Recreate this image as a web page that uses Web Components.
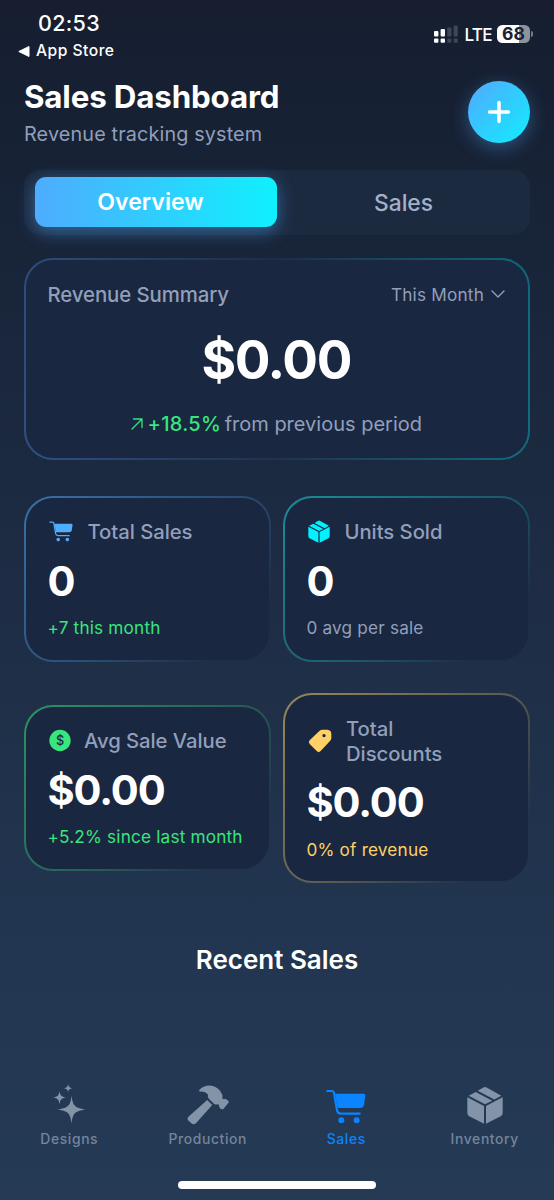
<!DOCTYPE html>
<html lang="en">
<head>
<meta charset="utf-8">
<meta name="viewport" content="width=device-width, initial-scale=1">
<title>Sales Dashboard</title>
<style>
    html, body {
        margin: 0;
        height: 100%;
    }
    body {
        font-family: Inter, "Liberation Sans", sans-serif;
        color: #fff;
        --muted: #929fbb;
        --blue: #4facfe;
        --cyan: #00f2fe;
        --green: #39e57d;
        --yellow: #ffd166;
        --card: #192740;
    }
</style>
</head>
<body>
<sales-app>
    <status-bar slot="status" time="02:53" back="App Store" network="LTE" battery="68"></status-bar>
    <page-header heading="Sales Dashboard" sub="Revenue tracking system"></page-header>
    <segment-control>
        <segment-item active>Overview</segment-item>
        <segment-item>Sales</segment-item>
    </segment-control>
    <revenue-card label="Revenue Summary" period="This Month" change="+18.5%" note="from previous period">$0.00</revenue-card>
    <stat-grid>
        <stat-card icon="cart" label="Total Sales" note="+7 this month" style="--edge: 79,172,254; --accent: var(--blue); --note: var(--green); --gap: 14.5px">0</stat-card>
        <stat-card icon="box" label="Units Sold" note="0 avg per sale" style="--edge: 30,222,226; --accent: var(--cyan); --note: var(--muted); --gap: 14.5px">0</stat-card>
        <stat-card icon="dollar" label="Avg Sale Value" note="+5.2% since last month" style="--edge: 57,229,125; --accent: var(--green); --note: var(--green); --gap: 13px">$0.00</stat-card>
        <stat-card icon="tag" label="Total Discounts" note="0% of revenue" style="--edge: 255,209,102; --accent: var(--yellow); --note: var(--yellow); --label-width: 120px">$0.00</stat-card>
    </stat-grid>
    <section-title>Recent Sales</section-title>
    <tab-bar slot="tabs">
        <tab-item icon="sparkles">Designs</tab-item>
        <tab-item icon="hammer">Production</tab-item>
        <tab-item icon="cart" active>Sales</tab-item>
        <tab-item icon="box">Inventory</tab-item>
    </tab-bar>
</sales-app>

<script>
const ICONS = {
    cart: {box: "0 0 120 106", body: `
        <path d="M4 6H17Q23 6 24 12L33 64Q35 74 44 74H101" fill="none" stroke="currentColor" stroke-width="6.5" stroke-linecap="round"/>
        <path d="M27 14H112Q119 14 118 21L114 48Q112 57 103 57H35Z"/>
        <circle cx="46" cy="94" r="9"/><circle cx="92" cy="94" r="9"/>`},
    box: {box: "0 0 108 114", body: `
        <path d="M1 34L51 60V113L7 91Q1 88 1 81Z"/>
        <path d="M107 34L57 60V113L101 91Q107 88 107 81Z"/>
        <path d="M5 29L26 18L76 44L54 55Z"/>
        <path d="M32 14.5L48 5Q54 1 60 5L103 29L82 40.5Z"/>`},
    dollar: {box: "0 0 64 64", body: `
        <circle cx="32" cy="32" r="31"/>
        <text x="32" y="45" text-anchor="middle" font-size="37" font-weight="500" fill="#1a2740">$</text>`},
    tag: {box: "0 0 72 72", body: `
        <path fill-rule="evenodd" d="M5 34L34 6Q38 2 44 2H58Q70 3 70 15V27Q70 32 66 36L37 67Q32 72 27 67L5 45Q0 39 5 34ZM48 15a5 5 0 1 0 .1 0Z"/>`},
    sparkles: {box: "0 0 96 116", body: `
        <path d="M54 34C58 64 63 69 95 74C63 79 58 84 54 115C50 84 45 79 13 74C45 69 50 64 54 34Z"/>
        <path d="M19 20C21 33 24 37 38 39C24 41 21 45 19 59C17 45 14 41 0 39C14 37 17 33 19 20Z"/>
        <path d="M44 0C45 8 48 11 56 12C48 13 45 16 44 24C43 16 40 13 32 12C40 11 43 8 44 0Z"/>`},
    hammer: {box: "0 0 128 120", body: `
        <path d="M37 15Q48 1 68 1Q88 2 100 18Q108 28 107 41Q112 44 116 41L120 44Q126 46 126 52L109 73Q102 74 99 69L97 64Q97 60 94 58Q87 60 82 57L67 43Q61 34 63 28Q53 17 39 20Q35 19 37 15Z"/>
        <path d="M61 45L76 60L27 115Q21 121 14 116L4 107Q-1 101 5 95Z"/>`},
    plus: {box: "0 0 22 22", body: `
        <path d="M11 1.7V20.3M1.7 11H20.3" fill="none" stroke="currentColor" stroke-width="3.6" stroke-linecap="round"/>`},
    chevron: {box: "0 0 14 8", body: `
        <path d="M1 1L7 7L13 1" fill="none" stroke="currentColor" stroke-width="1.4" stroke-linecap="round" stroke-linejoin="round"/>`},
    arrow: {box: "0 0 12 12", body: `
        <path d="M1 11L11 1M2.5 1H11V9.5" fill="none" stroke="currentColor" stroke-width="1.3" stroke-linecap="round" stroke-linejoin="round"/>`}
};

class BaseElement extends HTMLElement {
    constructor() {
        super();
        this.attachShadow({mode: "open"});
    }

    connectedCallback() {
        this.shadowRoot.innerHTML = this.render();
    }

    attr(name) {
        return this.getAttribute(name) || "";
    }
}

class UiIcon extends BaseElement {
    render() {
        const icon = ICONS[this.attr("name")];
        return `
            <style>
                :host { display: block; flex: none; }
                svg { display: block; width: 100%; height: 100%; fill: currentColor; }
            </style>
            <svg viewBox="${icon.box}" aria-hidden="true">${icon.body}</svg>
        `;
    }
}

class SalesApp extends BaseElement {
    render() {
        return `
            <style>
                :host {
                    display: flex;
                    flex-direction: column;
                    box-sizing: border-box;
                    width: 100%;
                    height: 1200px;
                    overflow: hidden;
                    background: linear-gradient(180deg, #161e30 0%, #182438 20%, #1e2d45 50%, #223651 80%, #253a55 100%);
                }
                main {
                    flex: 1;
                    display: flex;
                    flex-direction: column;
                    padding: 0 24px;
                }
            </style>
            <slot name="status"></slot>
            <main><slot></slot></main>
            <slot name="tabs"></slot>
        `;
    }
}

class StatusBar extends BaseElement {
    render() {
        return `
            <style>
                :host {
                    display: flex;
                    justify-content: space-between;
                    height: 76px;
                    padding: 0 21px 0 18px;
                }
                .time {
                    padding: 10px 0 0 20px;
                    font-size: 21.5px;
                    line-height: 26px;
                    font-weight: 500;
                    letter-spacing: .3px;
                }
                .back {
                    display: flex;
                    align-items: center;
                    gap: 6px;
                    padding-top: 5px;
                    font-size: 15.6px;
                    line-height: 20px;
                    font-weight: 500;
                    letter-spacing: .5px;
                }
                .back svg { width: 12px; height: 11px; }
                .right {
                    display: flex;
                    align-items: center;
                    height: 68px;
                }
                .signal { width: 24px; height: 18px; }
                .network {
                    margin: 0 5px 0 6px;
                    font-size: 17.2px;
                    font-weight: 500;
                    letter-spacing: -.7px;
                }
                .battery {
                    width: 33px;
                    height: 18px;
                    border-radius: 5.5px;
                    background: linear-gradient(90deg, #fff 68%, #8d929b 68%);
                    color: #182236;
                    font-size: 17.5px;
                    line-height: 18px;
                    font-weight: 700;
                    text-align: center;
                }
                .cap {
                    width: 2px;
                    height: 6px;
                    margin-left: 1px;
                    border-radius: 0 2px 2px 0;
                    background: #747b87;
                }
            </style>
            <div>
                <div class="time">${this.attr("time")}</div>
                <div class="back">
                    <svg viewBox="0 0 12 11"><path d="M.8 5.5L11 .5V10.5Z" fill="#fff" stroke="#fff" stroke-linejoin="round"/></svg>
                    <span>${this.attr("back")}</span>
                </div>
            </div>
            <div class="right">
                <svg class="signal" viewBox="0 0 24 18">
                    <g fill="#fff">
                        <rect x="0" y="6" width="4.4" height="5.4" rx="1"/><rect x="6.6" y="4" width="4.4" height="7.4" rx="1"/>
                        <rect x="0" y="13.4" width="4.4" height="4.4" rx="1"/><rect x="6.6" y="13.4" width="4.4" height="4.4" rx="1"/>
                    </g>
                    <g fill="#3d4556">
                        <rect x="13.2" y="2.4" width="4.2" height="9" rx="1"/><rect x="19.6" y=".6" width="4.2" height="10.8" rx="1"/>
                        <rect x="13.2" y="13.4" width="4.2" height="4.4" rx="1"/><rect x="19.6" y="13.4" width="4.2" height="4.4" rx="1"/>
                    </g>
                </svg>
                <span class="network">${this.attr("network")}</span>
                <span class="battery">${this.attr("battery")}</span>
                <span class="cap"></span>
            </div>
        `;
    }
}

class PageHeader extends BaseElement {
    render() {
        return `
            <style>
                :host {
                    display: flex;
                    justify-content: space-between;
                    height: 94px;
                }
                h1 {
                    margin: 1px 0 0;
                    font-size: 31.3px;
                    line-height: 40px;
                    font-weight: 700;
                    letter-spacing: -.15px;
                }
                p {
                    margin: 4px 0 0;
                    font-size: 19.8px;
                    line-height: 26px;
                    letter-spacing: .15px;
                    color: var(--muted);
                }
                button {
                    display: flex;
                    align-items: center;
                    justify-content: center;
                    width: 62px;
                    height: 62px;
                    margin: 5px 0 0;
                    padding: 0;
                    border: 0;
                    border-radius: 50%;
                    color: #fff;
                    background: linear-gradient(135deg, #4facfe 5%, #10eefe 100%);
                    box-shadow: 0 5px 18px rgba(79, 172, 254, .36);
                }
                ui-icon { width: 22px; height: 22px; }
            </style>
            <div>
                <h1>${this.attr("heading")}</h1>
                <p>${this.attr("sub")}</p>
            </div>
            <button aria-label="Add sale"><ui-icon name="plus"></ui-icon></button>
        `;
    }
}

class SegmentControl extends BaseElement {
    render() {
        return `
            <style>
                :host {
                    display: flex;
                    box-sizing: border-box;
                    height: 65px;
                    padding: 7px 11px 8px;
                    border-radius: 17px;
                    background: #1c2a40;
                }
            </style>
            <slot></slot>
        `;
    }
}

class SegmentItem extends BaseElement {
    render() {
        return `
            <style>
                :host {
                    flex: 1;
                    display: flex;
                    align-items: center;
                    justify-content: center;
                    border-radius: 11px;
                    padding: 1px 0 0 11px;
                    font-size: 22.8px;
                    font-weight: 500;
                    color: #a3b0cb;
                }
                :host([active]) {
                    padding: 0 11px 0 0;
                    font-size: 23.1px;
                    font-weight: 600;
                    color: #fff;
                    background: linear-gradient(90deg, #4facfe, #10f0fe);
                    box-shadow: 0 5px 18px rgba(79, 172, 254, .48);
                }
            </style>
            <slot></slot>
        `;
    }
}

class RevenueCard extends BaseElement {
    render() {
        return `
            <style>
                :host {
                    display: block;
                    box-sizing: border-box;
                    height: 202px;
                    margin-top: 23px;
                    padding: 20px 23px 0 21.5px;
                    border: 2px solid transparent;
                    border-radius: 29px;
                    background:
                        linear-gradient(var(--card), var(--card)) padding-box,
                        linear-gradient(90deg, rgba(79, 150, 254, .36), rgba(79, 172, 254, .08) 50%, rgba(0, 242, 254, .33)) border-box;
                }
                .top, .period, .change {
                    display: flex;
                    align-items: center;
                }
                .top {
                    justify-content: space-between;
                    height: 28px;
                    font-size: 20.4px;
                    font-weight: 500;
                    letter-spacing: -.1px;
                    color: var(--muted);
                }
                .period {
                    gap: 7px;
                    font-size: 17.2px;
                    font-weight: 400;
                    letter-spacing: .2px;
                }
                .period ui-icon { width: 14px; height: 8px; }
                .amount {
                    margin-top: 19px;
                    font-size: 53px;
                    line-height: 66px;
                    font-weight: 700;
                    letter-spacing: -1.4px;
                    text-align: center;
                }
                .change {
                    justify-content: center;
                    margin-top: 18px;
                    padding-left: 1px;
                    font-size: 20px;
                    line-height: 26px;
                    color: var(--muted);
                }
                .change ui-icon { width: 12px; height: 12px; margin-right: 4px; color: var(--green); }
                .change b { margin-right: 3.5px; font-weight: 500; letter-spacing: .3px; color: var(--green); }
            </style>
            <div class="top">
                <span>${this.attr("label")}</span>
                <span class="period"><span>${this.attr("period")}</span><ui-icon name="chevron"></ui-icon></span>
            </div>
            <div class="amount"><slot></slot></div>
            <div class="change">
                <ui-icon name="arrow"></ui-icon>
                <b>${this.attr("change")}</b>
                <span class="note">${this.attr("note")}</span>
            </div>
        `;
    }
}

class StatGrid extends BaseElement {
    render() {
        return `
            <style>
                :host {
                    display: grid;
                    grid-template-columns: 247px 247px;
                    column-gap: 12px;
                    row-gap: 31px;
                    align-items: center;
                    margin-top: 36px;
                }
            </style>
            <slot></slot>
        `;
    }
}

class StatCard extends BaseElement {
    render() {
        return `
            <style>
                :host {
                    display: block;
                    box-sizing: border-box;
                    padding: 21px 20px 20.5px 21.5px;
                    border: 2px solid transparent;
                    border-radius: 29px;
                    background:
                        linear-gradient(var(--card), var(--card)) padding-box,
                        linear-gradient(135deg, rgba(var(--edge), .55), rgba(var(--edge), .25) 55%, rgba(var(--edge), 0) 85%) border-box;
                }
                .top {
                    display: flex;
                    align-items: center;
                    gap: var(--gap, 14px);
                    font-size: 20.3px;
                    line-height: 25px;
                    font-weight: 500;
                    letter-spacing: -.05px;
                    color: var(--muted);
                }
                .label { max-width: var(--label-width, none); }
                ui-icon { margin-left: 1.5px; width: 22px; height: 23px; color: var(--accent); }
                ui-icon[name="cart"] { width: 24px; height: 21px; }
                ui-icon[name="tag"] { width: 24px; height: 24px; }
                .value {
                    margin-top: 10.5px;
                    font-size: 41.5px;
                    line-height: 52px;
                    font-weight: 700;
                    letter-spacing: -1.1px;
                }
                .note {
                    margin-top: 9.5px;
                    font-size: 17.2px;
                    line-height: 23px;
                    letter-spacing: .18px;
                    color: var(--note);
                    white-space: nowrap;
                }
            </style>
            <div class="top"><ui-icon name="${this.attr("icon")}"></ui-icon><span class="label">${this.attr("label")}</span></div>
            <div class="value"><slot></slot></div>
            <div class="note">${this.attr("note")}</div>
        `;
    }
}

class SectionTitle extends BaseElement {
    render() {
        return `
            <style>
                :host {
                    display: block;
                    margin-top: 60px;
                    font-size: 26px;
                    line-height: 34px;
                    font-weight: 600;
                    text-align: center;
                }
            </style>
            <slot></slot>
        `;
    }
}

class TabBar extends BaseElement {
    render() {
        return `
            <style>
                :host {
                    display: flex;
                    flex-direction: column;
                    justify-content: space-between;
                    align-items: center;
                    box-sizing: border-box;
                    height: 120px;
                    padding-bottom: 11.5px;
                }
                nav {
                    display: grid;
                    grid-template-columns: repeat(4, 1fr);
                    width: 100%;
                }
                .home {
                    width: 198px;
                    height: 7.5px;
                    border-radius: 4px;
                    background: #fff;
                }
            </style>
            <nav><slot></slot></nav>
            <div class="home"></div>
        `;
    }
}

class TabItem extends BaseElement {
    render() {
        return `
            <style>
                :host {
                    display: flex;
                    flex-direction: column;
                    align-items: center;
                    font-size: 13.9px;
                    line-height: 18px;
                    font-weight: 500;
                    letter-spacing: .62px;
                    color: #74859b;
                }
                :host([active]) { color: #0a84ff; }
                .icon {
                    display: flex;
                    align-items: center;
                    height: 50px;
                }
                ui-icon { width: 36px; height: 38px; color: #8394a8; }
                ui-icon[name="cart"] { width: 40px; height: 35.3px; margin-top: 3px; color: #0a84ff; }
                ui-icon[name="sparkles"] { width: 33px; height: 40px; margin-bottom: 2px; }
                ui-icon[name="hammer"] { width: 42.5px; height: 40px; }
            </style>
            <div class="icon"><ui-icon name="${this.attr("icon")}"></ui-icon></div>
            <slot></slot>
        `;
    }
}

customElements.define("ui-icon", UiIcon);
customElements.define("sales-app", SalesApp);
customElements.define("status-bar", StatusBar);
customElements.define("page-header", PageHeader);
customElements.define("segment-control", SegmentControl);
customElements.define("segment-item", SegmentItem);
customElements.define("revenue-card", RevenueCard);
customElements.define("stat-grid", StatGrid);
customElements.define("stat-card", StatCard);
customElements.define("section-title", SectionTitle);
customElements.define("tab-bar", TabBar);
customElements.define("tab-item", TabItem);
</script>
</body>
</html>
